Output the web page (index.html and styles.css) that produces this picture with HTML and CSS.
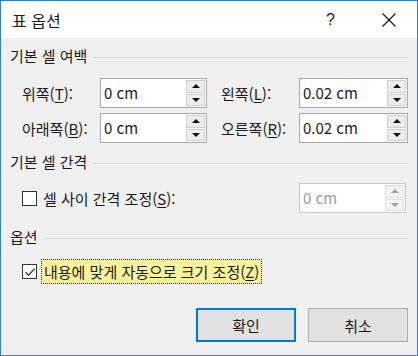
FILE: index.html
```html
<!DOCTYPE html>
<html lang="ko">
<head>
    <meta charset="UTF-8">
    <title>표 옵션</title>
    <link rel="stylesheet" href="styles.css">
</head>
<body>

<div class="window">
    <div class="titlebar">
        <span class="title">표 옵션</span>
        <span class="help">?</span>
        <span class="close">
            <svg width="16" height="16" viewBox="0 0 16 16"><path d="M1.5 1.5 L14.5 14.5 M14.5 1.5 L1.5 14.5" stroke="#111" stroke-width="1.1" fill="none"/></svg>
        </span>
    </div>

    <div class="content">
        <div class="section-title"><span>기본 셀 여백</span></div>
        <div class="margins">
            <label class="field-label">위쪽(<u>T</u>):</label>
            <div class="spin">
                <span class="spin-val">0 cm</span>
                <span class="spin-btns"><span class="up"></span><span class="down"></span></span>
            </div>
            <label class="field-label right">왼쪽(<u>L</u>):</label>
            <div class="spin">
                <span class="spin-val">0.02 cm</span>
                <span class="spin-btns"><span class="up"></span><span class="down"></span></span>
            </div>
            <label class="field-label">아래쪽(<u>B</u>):</label>
            <div class="spin">
                <span class="spin-val">0 cm</span>
                <span class="spin-btns"><span class="up"></span><span class="down"></span></span>
            </div>
            <label class="field-label right">오른쪽(<u>R</u>):</label>
            <div class="spin">
                <span class="spin-val">0.02 cm</span>
                <span class="spin-btns"><span class="up"></span><span class="down"></span></span>
            </div>
        </div>

        <div class="section-title"><span>기본 셀 간격</span></div>
        <div class="spacing">
            <span class="check"></span>
            <span class="check-label">셀 사이 간격 조정(<u>S</u>):</span>
            <div class="spin disabled">
                <span class="spin-val">0 cm</span>
                <span class="spin-btns"><span class="up"></span><span class="down"></span></span>
            </div>
        </div>

        <div class="section-title"><span>옵션</span></div>
        <div class="options">
            <span class="check">
                <svg width="12" height="12" viewBox="0 0 12 12"><path d="M1.5 6.2 L4.6 9.2 L10.6 2.6" stroke="#222" stroke-width="1.2" fill="none"/></svg>
            </span>
            <span class="check-label focused">내용에 맞게 자동으로 크기 조정(<u>Z</u>)</span>
        </div>

        <div class="buttons">
            <a href="#" class="button default">확인</a>
            <a href="#" class="button">취소</a>
        </div>
    </div>
</div>

</body>
</html>
```

FILE: styles.css
```css
body {
    margin: 0;
    font-family: "Noto Sans CJK KR", "Noto Sans", sans-serif;
    color: #1a1a1a;
}
.window {
    width: 418px;
    height: 356px;
    box-sizing: border-box;
    border: 1px solid #2f7fd4;
    background: #f0f0f0;
    display: flex;
    flex-direction: column;
}
.titlebar {
    height: 37px;
    background: white;
    display: flex;
    align-items: center;
    padding-left: 11px;
}
.title {
    font-size: 16px;
    flex: 1;
}
.help {
    font-family: "Liberation Sans", sans-serif;
    font-size: 16px;
    width: 55px;
    text-align: left;
}
.close {
    width: 34px;
    display: flex;
    margin-right: 2px;
}
.content {
    flex: 1;
    padding: 8px 9px 0 9px;
    font-size: 15px;
}
.section-title {
    display: flex;
    align-items: center;
    height: 20px;
    line-height: 20px;
}
.section-title::after {
    content: "";
    flex: 1;
    height: 1px;
    background: #dcdcdc;
    margin-left: 6px;
    margin-top: 2px;
}
.margins {
    display: grid;
    grid-template-columns: 78px 107px 92px 109px;
    row-gap: 5px;
    align-items: center;
    margin: 12px 0 9px 12px;
}
.field-label {
    white-space: nowrap;
}
.field-label.right {
    padding-left: 14px;
}
u {
    text-decoration: underline;
    text-underline-offset: 2px;
}
.spin {
    display: flex;
    height: 30px;
    box-sizing: border-box;
    border: 1px solid #a8a8a8;
    background: white;
}
.spin-val {
    flex: 1;
    padding-left: 3px;
    line-height: 27px;
    white-space: nowrap;
}
.spin-btns {
    width: 19px;
    display: flex;
    flex-direction: column;
    gap: 1px;
    padding: 1px 1px 1px 0;
}
.spin-btns span {
    flex: 1;
    border: 1px solid #cfcfcf;
    background: #ececec;
    display: flex;
    align-items: center;
    justify-content: center;
}
.spin-btns .up::before {
    content: "";
    border-left: 4px solid transparent;
    border-right: 4px solid transparent;
    border-bottom: 4px solid #111;
}
.spin-btns .down::before {
    content: "";
    border-left: 4px solid transparent;
    border-right: 4px solid transparent;
    border-top: 4px solid #111;
}
.spin.disabled {
    border-color: #c8c8c8;
    color: #9a9a9a;
    width: 107px;
    margin-left: auto;
}
.spin.disabled .spin-btns span {
    background: #f2f2f2;
    border-color: #dedede;
}
.spin.disabled .up::before {
    border-bottom-color: #a0a0a0;
}
.spin.disabled .down::before {
    border-top-color: #a0a0a0;
}
.spacing {
    display: flex;
    align-items: center;
    margin: 11px 2px 14px 12px;
}
.check {
    width: 13px;
    height: 13px;
    border: 1px solid #333;
    background: white;
    display: flex;
    align-items: center;
    justify-content: center;
    flex-shrink: 0;
}
.check-label {
    margin-left: 6px;
}
.options {
    display: flex;
    align-items: center;
    margin: 12px 0 0 12px;
}
.check-label.focused {
    margin-left: 4px;
    padding: 1px 2px;
    background: #faf39c;
    border: 1px dotted #333;
    line-height: 21px;
}
.buttons {
    display: flex;
    justify-content: flex-end;
    gap: 12px;
    margin-top: 24px;
}
.button {
    width: 100px;
    height: 34px;
    box-sizing: border-box;
    display: flex;
    align-items: center;
    justify-content: center;
    background: #e1e1e1;
    border: 1px solid #adadad;
    color: #1a1a1a;
    text-decoration: none;
}
.button.default {
    border: 2px solid #0078d7;
}
```
